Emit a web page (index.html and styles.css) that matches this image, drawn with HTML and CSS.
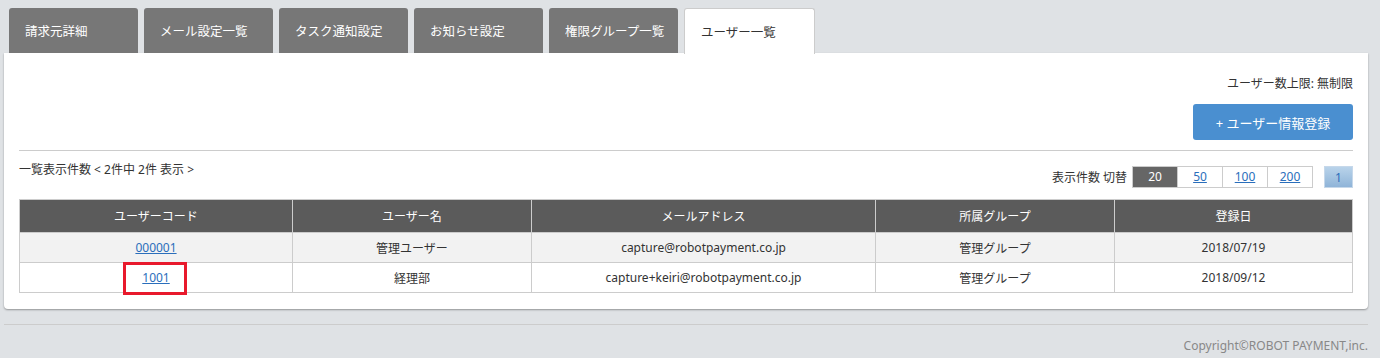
FILE: index.html
```html
<html><head>
  <meta charset="utf-8">
  <title>ユーザー一覧</title>
  <link rel="stylesheet" href="styles.css">
</head>
<body>
  <ul class="tabs">
    <li class="tab">請求元詳細</li>
    <li class="tab">メール設定一覧</li>
    <li class="tab">タスク通知設定</li>
    <li class="tab">お知らせ設定</li>
    <li class="tab">権限グループ一覧</li>
    <li class="tab active">ユーザー一覧</li>
  </ul>

  <main class="panel">
    <div class="limit">ユーザー数上限: 無制限</div>
    <div class="actions">
      <button class="add-button">+ ユーザー情報登録</button>
    </div>
    <hr class="divider">

    <div class="listbar">
      <div class="count">一覧表示件数 &lt; 2件中 2件 表示 &gt;</div>
      <div class="pager">
        <span class="pager-label">表示件数 切替</span>
        <div class="sizes">
          <span class="size current">20</span>
          <a class="size" href="#">50</a>
          <a class="size" href="#">100</a>
          <a class="size" href="#">200</a>
        </div>
        <span class="page">1</span>
      </div>
    </div>

    <table class="users">
      <thead>
        <tr>
          <th class="col-code">ユーザーコード</th>
          <th class="col-name">ユーザー名</th>
          <th class="col-mail">メールアドレス</th>
          <th class="col-group">所属グループ</th>
          <th>登録日</th>
        </tr>
      </thead>
      <tbody>
        <tr class="odd">
          <td><a href="#">000001</a></td>
          <td>管理ユーザー</td>
          <td>capture@robotpayment.co.jp</td>
          <td>管理グループ</td>
          <td>2018/07/19</td>
        </tr>
        <tr>
          <td><a href="#" class="marked">1001</a></td>
          <td>経理部</td>
          <td>capture+keiri@robotpayment.co.jp</td>
          <td>管理グループ</td>
          <td>2018/09/12</td>
        </tr>
      </tbody>
    </table>
  </main>

  <footer class="footer">Copyright©ROBOT PAYMENT,inc.</footer>
</body></html>
```

FILE: styles.css
```css
body {
  margin: 0;
  padding: 8px 12px 0 4px;
  background-color: #dfe2e5;
  font-family: "Noto Sans", "Noto Sans CJK JP", sans-serif;
  font-size: 12px;
  color: #333;
}

.tabs {
  display: flex;
  gap: 6px;
  list-style: none;
  margin: 0;
  padding: 0 0 0 5px;
  height: 45px;
}

.tab {
  width: 129px;
  box-sizing: border-box;
  padding: 13px 0 0 16px;
  background-color: #777;
  color: #fff;
  font-size: 12.5px;
  border-radius: 3px 3px 0 0;
}

.tab.active {
  width: 131px;
  background-color: #fff;
  color: #333;
  border: 1px solid #ccc;
  border-bottom: none;
  height: 46px;
  position: relative;
  z-index: 1;
}

.panel {
  display: block;
  background-color: #fff;
  border-radius: 0 0 4px 4px;
  box-shadow: 0 1px 2px rgba(0, 0, 0, 0.35);
  padding: 20px 15px 16px 15px;
}

.limit {
  text-align: right;
  line-height: 22px;
}

.actions {
  display: flex;
  justify-content: flex-end;
  margin-top: 9px;
}

.add-button {
  width: 160px;
  height: 36px;
  background-color: #4a8fd0;
  color: #fff;
  border: none;
  border-radius: 3px;
  font-family: inherit;
  font-size: 13px;
}

.divider {
  border: none;
  border-top: 1px solid #ccc;
  margin: 10px 0 0 0;
}

.listbar {
  display: flex;
  justify-content: space-between;
  align-items: flex-start;
  margin-top: 8px;
  height: 40px;
}

.count {
  line-height: 22px;
}

.pager {
  display: flex;
  align-items: center;
  margin-top: 7px;
}

.pager-label {
  margin-right: 5px;
}

.sizes {
  display: flex;
  border: 1px solid #ccc;
}

.size {
  width: 44px;
  height: 20px;
  line-height: 20px;
  text-align: center;
  color: #2a6ebb;
  border-left: 1px solid #ccc;
}

.size:first-child {
  border-left: none;
}

.size.current {
  background-color: #666;
  color: #fff;
}

.page {
  margin-left: 11px;
  width: 29px;
  height: 22px;
  line-height: 22px;
  text-align: center;
  color: #2a6ebb;
  background: linear-gradient(#b9d3ea, #8fb4d8);
  border: 1px solid #c6d8ea;
  box-sizing: border-box;
}

.users {
  width: 100%;
  border-collapse: collapse;
  table-layout: fixed;
  font-size: 12px;
}

.users th, .users td {
  border: 1px solid #ccc;
  text-align: center;
  font-weight: normal;
  padding: 0;
}

.users th {
  background-color: #5b5b5b;
  color: #fff;
  height: 33px;
}

.users td {
  height: 30px;
  color: #333;
}

.users tr.odd td {
  background-color: #f2f2f2;
}

.users a {
  color: #2a6ebb;
}

.col-code { width: 272px; }
.col-name { width: 238px; }
.col-mail { width: 343px; }
.col-group { width: 238px; }

.marked {
  position: relative;
}

.marked::after {
  content: "";
  position: absolute;
  left: -19px;
  right: -17px;
  top: -7px;
  bottom: -9px;
  border: 3px solid #e8192c;
}

.footer {
  margin-top: 15px;
  border-top: 1px solid #ccc;
  text-align: right;
  color: #888;
  padding-top: 12px;
}
```
